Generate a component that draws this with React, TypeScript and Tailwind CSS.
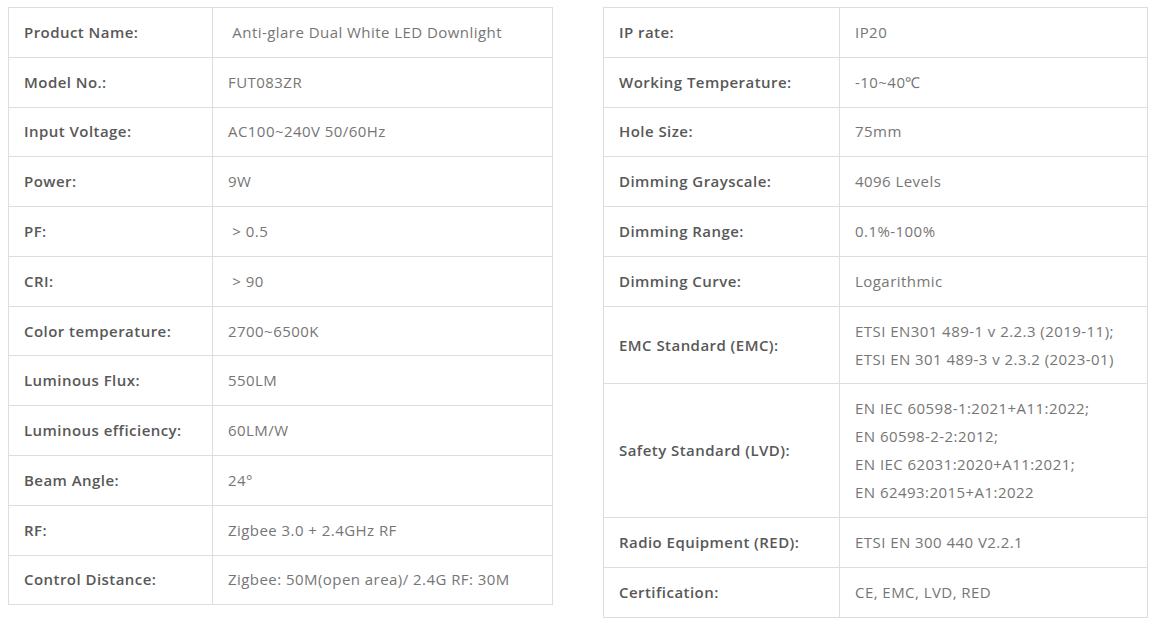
import React from "react";

type Spec = { label: string; value: string[] };

const leftSpecs: Spec[] = [
  { label: "Product Name:", value: [" Anti-glare Dual White LED Downlight"] },
  { label: "Model No.:", value: ["FUT083ZR"] },
  { label: "Input Voltage:", value: ["AC100~240V 50/60Hz"] },
  { label: "Power:", value: ["9W"] },
  { label: "PF:", value: [" > 0.5"] },
  { label: "CRI:", value: [" > 90"] },
  { label: "Color temperature:", value: ["2700~6500K"] },
  { label: "Luminous Flux:", value: ["550LM"] },
  { label: "Luminous efficiency:", value: ["60LM/W"] },
  { label: "Beam Angle:", value: ["24°"] },
  { label: "RF:", value: ["Zigbee 3.0 + 2.4GHz RF"] },
  { label: "Control Distance:", value: ["Zigbee: 50M(open area)/ 2.4G RF: 30M"] },
];

const rightSpecs: Spec[] = [
  { label: "IP rate:", value: ["IP20"] },
  { label: "Working Temperature:", value: ["-10~40℃"] },
  { label: "Hole Size:", value: ["75mm"] },
  { label: "Dimming Grayscale:", value: ["4096 Levels"] },
  { label: "Dimming Range:", value: ["0.1%-100%"] },
  { label: "Dimming Curve:", value: ["Logarithmic"] },
  {
    label: "EMC Standard (EMC):",
    value: ["ETSI EN301 489-1 v 2.2.3 (2019-11);", "ETSI EN 301 489-3 v 2.3.2 (2023-01)"],
  },
  {
    label: "Safety Standard (LVD):",
    value: [
      "EN IEC 60598-1:2021+A11:2022;",
      "EN 60598-2-2:2012;",
      "EN IEC 62031:2020+A11:2021;",
      "EN 62493:2015+A1:2022",
    ],
  },
  { label: "Radio Equipment (RED):", value: ["ETSI EN 300 440 V2.2.1"] },
  { label: "Certification:", value: ["CE, EMC, LVD, RED"] },
];

const SpecTable: React.FC<{ rows: Spec[]; labelWidth: string }> = ({ rows, labelWidth }) => (
  <table className="w-[545px] border-collapse border border-[#dddddd] self-start">
    <tbody>
      {rows.map((row) => (
        <tr key={row.label}>
          <td
            className={`${labelWidth} border border-[#dddddd] px-[15px] pt-[9.9px] pb-[10.9px] align-middle text-[15px] font-semibold leading-[28px] tracking-[0.45px] text-[#585858]`}
          >
            {row.label}
          </td>
          <td className="border border-[#dddddd] px-[15px] pt-[9.9px] pb-[10.9px] align-middle text-[15px] leading-[28px] tracking-[0.45px] text-[#767676] whitespace-pre">
            {row.value.map((line) => (
              <div key={line}>{line}</div>
            ))}
          </td>
        </tr>
      ))}
    </tbody>
  </table>
);

export default function App() {
  return (
    <div className="min-h-[631px] bg-white pt-[7px] pl-[8px] font-['Open_Sans',sans-serif]">
      <div className="flex items-start gap-[50px]">
        <SpecTable rows={leftSpecs} labelWidth="w-[204px]" />
        <SpecTable rows={rightSpecs} labelWidth="w-[236px]" />
      </div>
    </div>
  );
}
